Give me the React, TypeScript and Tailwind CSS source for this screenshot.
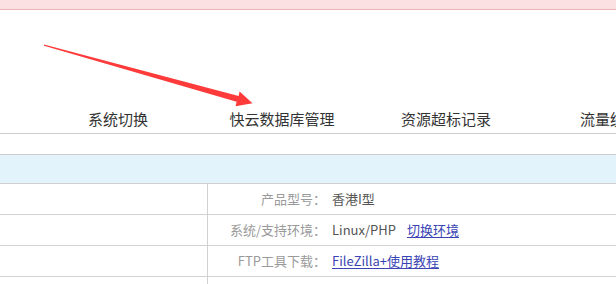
import React from "react";

const tabs = ["系统切换", "快云数据库管理", "资源超标记录", "流量统计"];

function Arrow() {
  return (
    <svg className="absolute left-0 top-0 pointer-events-none" width="616" height="284" viewBox="0 0 616 284">
      <polygon
        points="44,44.4 238.6,96.0 239.6,91.6 252.5,103.2 235.6,106.2 236.6,101.8 44,45.8"
        fill="#ff3a3a"
      />
    </svg>
  );
}

function InfoRow({ label, children }: { label: string; children?: React.ReactNode }) {
  return (
    <div className="flex h-[31px] border-b border-[#d2d2d2]">
      <div className="w-[208px] shrink-0 border-r border-[#d2d2d2]" />
      <div className="w-[118px] shrink-0 text-right text-[13px] leading-[30px] text-[#9a9a9a]">{label}</div>
      <div className="flex-1 pl-[6px] text-[13px] leading-[30px] text-[#555]">{children}</div>
    </div>
  );
}

export default function App() {
  return (
    <div
      className="relative w-[616px] h-[284px] overflow-hidden bg-white"
      style={{ fontFamily: '"Noto Sans CJK SC", "Microsoft YaHei", sans-serif' }}
    >
      <div className="h-[10px] bg-[#fbe1e1] border-b border-[#efb4b4]" />

      <div className="pt-[94px] border-b border-[#cccccc]">
        <div className="flex pl-[36px] whitespace-nowrap">
          {tabs.map((t) => (
            <div key={t} className="w-[164px] shrink-0 text-center text-[15px] leading-[29px] text-[#333]">
              {t}
            </div>
          ))}
        </div>
      </div>

      <div className="mt-[20px] h-[30px] bg-[#e3f3fb] border-y border-[#cfcfcf]" />

      <InfoRow label="产品型号：">香港I型</InfoRow>
      <InfoRow label="系统/支持环境：">
        <span>Linux/PHP</span>
        <a className="ml-[11px] text-[#3a44b4] underline underline-offset-2">切换环境</a>
      </InfoRow>
      <InfoRow label="FTP工具下载：">
        <a className="text-[#3a44b4] underline underline-offset-2">FileZilla+使用教程</a>
      </InfoRow>
      <InfoRow label="" />

      <Arrow />
    </div>
  );
}
